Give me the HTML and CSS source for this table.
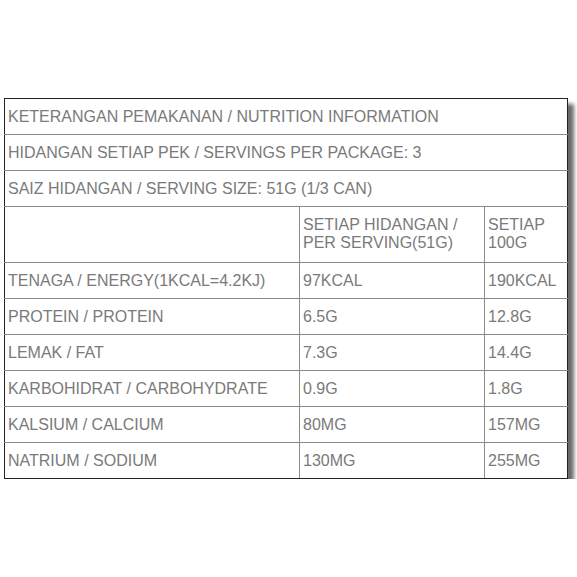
FILE: index.html
```html
<!DOCTYPE html>
<html>
<head>
<meta charset="utf-8">
<link rel="stylesheet" href="styles.css">
</head>
<body>
<div class="wrap">
<table class="nut">
<colgroup><col class="c1"><col class="c2"><col class="c3"></colgroup>
<tr><td colspan="3">KETERANGAN PEMAKANAN / NUTRITION INFORMATION</td></tr>
<tr><td colspan="3">HIDANGAN SETIAP PEK / SERVINGS PER PACKAGE: 3</td></tr>
<tr><td colspan="3">SAIZ HIDANGAN / SERVING SIZE: 51G (1/3 CAN)</td></tr>
<tr class="head"><td></td><td>SETIAP HIDANGAN /<br>PER SERVING(51G)</td><td>SETIAP<br>100G</td></tr>
<tr><td>TENAGA / ENERGY(1KCAL=4.2KJ)</td><td>97KCAL</td><td>190KCAL</td></tr>
<tr><td>PROTEIN / PROTEIN</td><td>6.5G</td><td>12.8G</td></tr>
<tr><td>LEMAK / FAT</td><td>7.3G</td><td>14.4G</td></tr>
<tr><td>KARBOHIDRAT / CARBOHYDRATE</td><td>0.9G</td><td>1.8G</td></tr>
<tr><td>KALSIUM / CALCIUM</td><td>80MG</td><td>157MG</td></tr>
<tr><td>NATRIUM / SODIUM</td><td>130MG</td><td>255MG</td></tr>
</table>
</div>
</body>
</html>
```
FILE: styles.css
```css
html, body { margin: 0; padding: 0; background: #fff; }
.wrap { padding: 98px 0 0 4px; }
.nut {
  border-collapse: collapse;
  width: 563px;
  table-layout: fixed;
  font-family: "Liberation Sans", Arial, sans-serif;
  font-size: 16px;
  color: #7a7a7a;
  border: 1px solid #222;
  box-shadow: 6px 6px 4px #6a6a6a;
}
.c1 { width: 295px; }
.c2 { width: 185px; }
.c3 { width: 83px; }
.nut td {
  border: 1px solid #8a8a8a;
  height: 36px;
  padding: 0 3px;
  box-sizing: border-box;
  vertical-align: middle;
  line-height: 18px;
  white-space: nowrap;
}
.nut tr.head td { height: 56px; vertical-align: top; padding-top: 9px; }
.nut tr:first-child td { border-top-color: #222; }
.nut tr:last-child td { border-bottom-color: #222; }
.nut td:first-child { border-left-color: #222; }
.nut td:last-child { border-right-color: #222; }
```
